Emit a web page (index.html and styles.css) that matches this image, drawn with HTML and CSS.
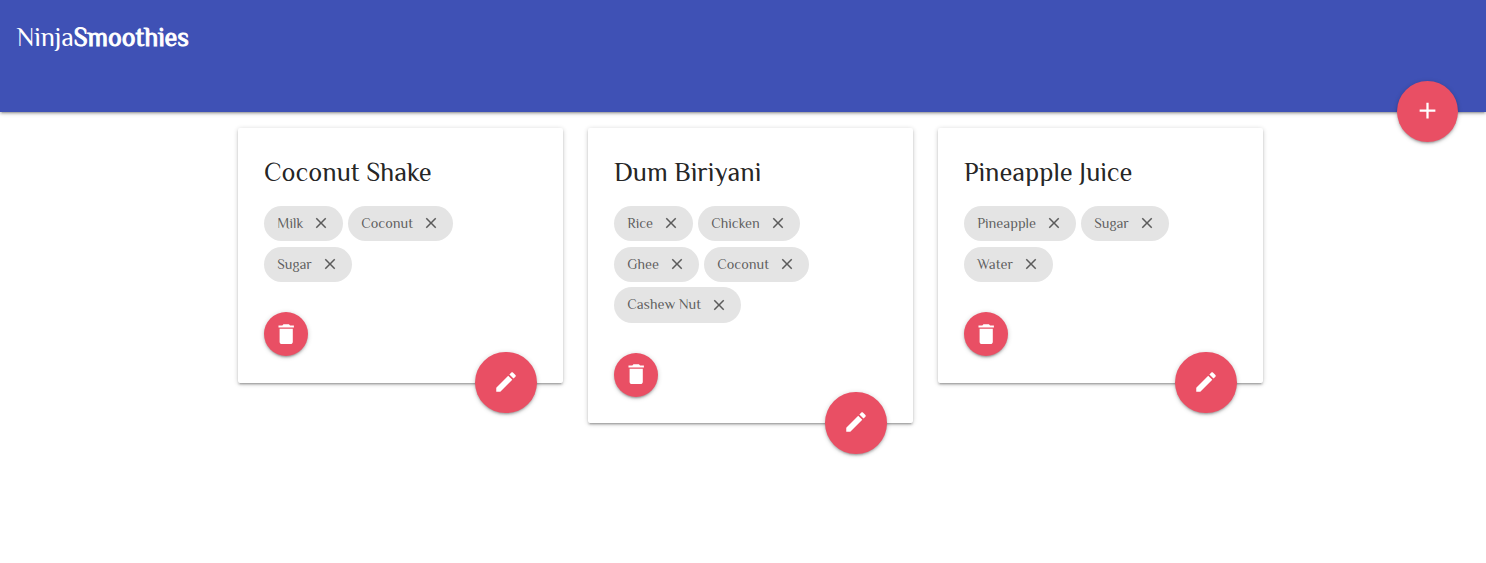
FILE: index.html
```html
<!DOCTYPE html>
<html lang="en">
<head>
<meta charset="utf-8">
<title>NinjaSmoothies</title>
<link rel="stylesheet" href="styles.css">
</head>
<body>
<svg class="sprite" aria-hidden="true">
  <symbol id="close" viewBox="0 0 24 24"><path d="M19 6.41L17.59 5 12 10.59 6.41 5 5 6.41 10.59 12 5 17.59 6.41 19 12 13.41 17.59 19 19 17.59 13.41 12z"/></symbol>
  <symbol id="delete" viewBox="0 0 24 24"><path d="M6 19c0 1.1.9 2 2 2h8c1.1 0 2-.9 2-2V7H6v12zM19 4h-3.5l-1-1h-5l-1 1H5v2h14V4z"/></symbol>
  <symbol id="edit" viewBox="0 0 24 24"><path d="M3 17.25V21h3.75L17.81 9.94l-3.75-3.75L3 17.25zM20.71 7.04c.39-.39.39-1.02 0-1.41l-2.34-2.34c-.39-.39-1.02-.39-1.41 0l-1.83 1.83 3.75 3.75 1.83-1.83z"/></symbol>
  <symbol id="add" viewBox="0 0 24 24"><path d="M19 13h-6v6h-2v-6H5v-2h6V5h2v6h6v2z"/></symbol>
</svg>
<nav class="navbar">
  <a class="brand">Ninja<span class="brand-strong">Smoothies</span></a>
  <a class="fab fab-add"><svg><use href="#add"/></svg></a>
</nav>
<main class="cards">
  <section class="card">
    <h2 class="title">Coconut Shake</h2>
    <div class="chips">
      <span class="chip milk"><span>Milk</span><svg><use href="#close"/></svg></span>
      <span class="chip coconut"><span>Coconut</span><svg><use href="#close"/></svg></span>
      <span class="chip sugar"><span>Sugar</span><svg><use href="#close"/></svg></span>
    </div>
    <a class="delete"><svg><use href="#delete"/></svg></a>
    <a class="fab fab-edit"><svg><use href="#edit"/></svg></a>
  </section>
  <section class="card">
    <h2 class="title">Dum Biriyani</h2>
    <div class="chips">
      <span class="chip rice"><span>Rice</span><svg><use href="#close"/></svg></span>
      <span class="chip chicken"><span>Chicken</span><svg><use href="#close"/></svg></span>
      <span class="chip ghee"><span>Ghee</span><svg><use href="#close"/></svg></span>
      <span class="chip coconut"><span>Coconut</span><svg><use href="#close"/></svg></span>
      <span class="chip cashew"><span>Cashew Nut</span><svg><use href="#close"/></svg></span>
    </div>
    <a class="delete"><svg><use href="#delete"/></svg></a>
    <a class="fab fab-edit"><svg><use href="#edit"/></svg></a>
  </section>
  <section class="card">
    <h2 class="title">Pineapple Juice</h2>
    <div class="chips">
      <span class="chip pineapple"><span>Pineapple</span><svg><use href="#close"/></svg></span>
      <span class="chip sugar"><span>Sugar</span><svg><use href="#close"/></svg></span>
      <span class="chip water"><span>Water</span><svg><use href="#close"/></svg></span>
    </div>
    <a class="delete"><svg><use href="#delete"/></svg></a>
    <a class="fab fab-edit"><svg><use href="#edit"/></svg></a>
  </section>
</main>
</body>
</html>
```
FILE: styles.css
```css
* { box-sizing: border-box; }
body {
  margin: 0;
  min-height: 100vh;
  background: #fff;
  color: rgba(0, 0, 0, .87);
  font-family: Philosopher, "Liberation Serif", serif;
}
svg { display: block; fill: currentColor; }
.sprite { display: none; }
.navbar {
  position: relative;
  height: 112px;
  padding: 19px 16.5px;
  background: #3f51b5;
  color: #fff;
  box-shadow: 0 2px 2px rgba(0, 0, 0, .14), 0 3px 1px -2px rgba(0, 0, 0, .12), 0 1px 5px rgba(0, 0, 0, .2);
}
.brand { display: block; font-size: 26px; line-height: 38px; }
.brand-strong { -webkit-text-stroke: 1px #fff; }
.fab {
  position: absolute;
  display: grid;
  place-items: center;
  border-radius: 50%;
  background: #e94f64;
  color: #fff;
  box-shadow: 0 2px 2px rgba(0, 0, 0, .14), 0 3px 1px -2px rgba(0, 0, 0, .12), 0 1px 5px rgba(0, 0, 0, .2);
}
.fab svg { width: 26px; height: 26px; margin-bottom: 1.6px; }
.fab-add { right: 28px; bottom: -30px; width: 61px; height: 61px; }
.fab-add svg { width: 27px; height: 27px; margin: 0 1px 2px 0; }
.fab-edit { right: 26px; bottom: -30.5px; width: 61.6px; height: 61.6px; }
.cards {
  display: flex;
  align-items: flex-start;
  gap: 25px;
  padding: 16px 0 0 238px;
}
.card {
  position: relative;
  width: 325px;
  padding: 26px 26px 26.8px;
  border-radius: 2px;
  background: #fff;
  box-shadow: 0 2px 2px rgba(0, 0, 0, .14), 0 3px 1px -2px rgba(0, 0, 0, .12), 0 1px 5px rgba(0, 0, 0, .2);
}
.title {
  margin: 0 0 16px;
  font-size: 26.4px;
  font-weight: 400;
  line-height: 36px;
  white-space: nowrap;
}
.chips { display: flex; flex-wrap: wrap; gap: 5.5px 5px; width: 230px; }
.chip {
  display: flex;
  align-items: center;
  justify-content: space-between;
  height: 35.2px;
  padding: 0 13px 0 13.2px;
  border-radius: 18px;
  background: #e4e4e4;
  color: rgba(0, 0, 0, .6);
  font-size: 14.3px;
  line-height: 35.2px;
  white-space: nowrap;
}
.chip svg { width: 18px; height: 18px; margin-bottom: .6px; }
.chip > span { margin-top: -.3px; }
.milk { width: 79px; }
.coconut { width: 105px; }
.sugar { width: 88px; }
.rice { width: 79px; }
.chicken { width: 102px; }
.ghee { width: 85px; }
.cashew { width: 127px; }
.pineapple { width: 112px; }
.water { width: 89px; }
.delete {
  display: grid;
  place-items: center;
  width: 44px;
  height: 44px;
  margin-top: 30px;
  border-radius: 50%;
  background: #e94f64;
  color: #fff;
  box-shadow: 0 2px 2px rgba(0, 0, 0, .14), 0 3px 1px -2px rgba(0, 0, 0, .12), 0 1px 5px rgba(0, 0, 0, .2);
}
.delete svg { width: 26.4px; height: 26.4px; }
```
